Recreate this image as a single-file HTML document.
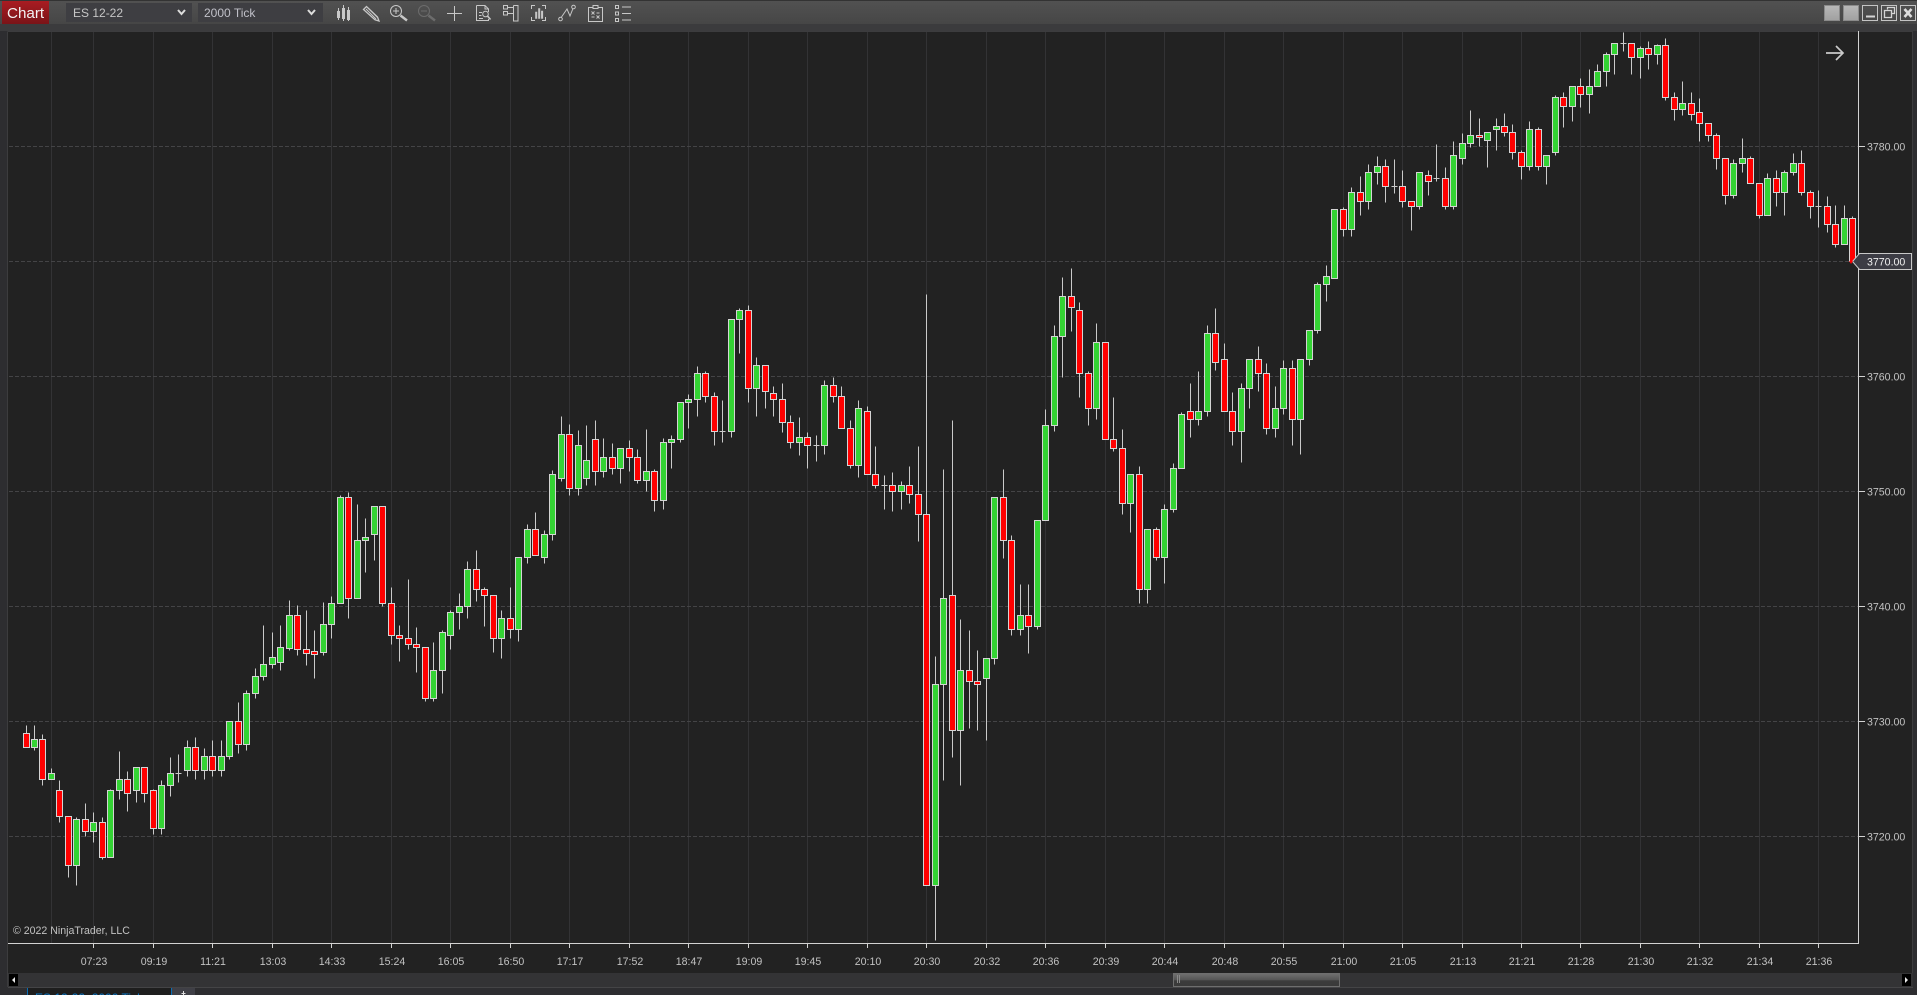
<!DOCTYPE html>
<html lang="en">
<head>
<meta charset="utf-8">
<title>Chart</title>
<style>
html,body{margin:0;padding:0;background:#222;width:1917px;height:995px;overflow:hidden}
svg{display:block}
text{font-family:"Liberation Sans",Arial,sans-serif}
</style>
</head>
<body>
<svg xmlns="http://www.w3.org/2000/svg" width="1917" height="995" viewBox="0 0 1917 995">
<defs>
<linearGradient id="bar" x1="0" y1="0" x2="0" y2="1"><stop offset="0" stop-color="#525252"/><stop offset="1" stop-color="#464646"/></linearGradient>
<linearGradient id="red" x1="0" y1="0" x2="0" y2="1"><stop offset="0" stop-color="#a91c22"/><stop offset="1" stop-color="#7a1418"/></linearGradient>
<linearGradient id="win" x1="0" y1="0" x2="0" y2="1"><stop offset="0" stop-color="#b8b8b8"/><stop offset="1" stop-color="#a0a0a0"/></linearGradient>
<linearGradient id="thumb" x1="0" y1="0" x2="0" y2="1"><stop offset="0" stop-color="#707070"/><stop offset=".5" stop-color="#555"/><stop offset=".55" stop-color="#3c3c3c"/><stop offset="1" stop-color="#3a3a3a"/></linearGradient>
</defs>

<!-- background frame -->
<rect width="1917" height="995" fill="#2d2d30"/>
<rect x="0" y="0" width="1917" height="24" fill="url(#bar)"/>
<rect x="0" y="0" width="1917" height="1" fill="#333"/>
<rect x="0" y="24" width="1917" height="7" fill="#3b3b3d"/>
<rect x="7" y="31" width="1906" height="942" fill="#222222"/>
<path d="M7.5 31.5H1912.5V973M7.5 31.5V987" fill="none" stroke="#3c3c3e"/>

<!-- toolbar -->
<rect x="2" y="1" width="47" height="23" fill="url(#red)"/>
<text x="7" y="18" font-size="15.2" fill="#f2f2f2">Chart</text>
<rect x="66" y="3" width="126" height="19" fill="#3e3e42"/>
<text x="73" y="17" font-size="12" fill="#c6c6c6">ES 12-22</text>
<path d="M178 10l3.5 4 3.5-4" fill="none" stroke="#dcdcdc" stroke-width="2"/>
<rect x="198" y="3" width="125" height="19" fill="#3e3e42"/>
<text x="204" y="17" font-size="12" fill="#c0c0c8">2000 Tick</text>
<path d="M308 10l3.5 4 3.5-4" fill="none" stroke="#dcdcdc" stroke-width="2"/>

<g fill="none" stroke="#c8c8c8" stroke-width="1">
 <!-- candles -->
 <path d="M338.5 8V20M343.5 5V21M348.5 7V21"/>
 <path d="M337 11h3v7h-3zM342 8h3v11h-3zM347 10h3v10h-3z" fill="#c8c8c8" stroke="none"/>
 <!-- pencil -->
 <path d="M363.5 9.5L366.5 6.5L377.5 17L379 21L375 19.8Z" stroke-width="1.3"/>
 <path d="M366 9L376 19M368 8L378 18" stroke-width="1"/>
 <!-- zoom in -->
 <circle cx="396" cy="11" r="5.5"/>
 <path d="M393 11h6M396 8v6"/>
 <path d="M400.5 15.5L407 20.5" stroke-width="2.4"/>
 <!-- zoom out -->
 <g stroke="#6c6c6c"><circle cx="424" cy="11" r="5.5"/><path d="M421 11h6"/><path d="M428.5 15.5L435 20.5" stroke-width="2.4"/></g>
 <!-- crosshair -->
 <path d="M447 13.5H462M454.5 6V21"/>
 <!-- doc search -->
 <path d="M476.5 5.5H485L488.5 9V12M485 5.5V9H488.5M488.5 19V20.5H476.5V5.5"/>
 <path d="M479 12.5h3M479 15.5h2.5M479 18.5h4"/>
 <circle cx="485.5" cy="14" r="2.8"/>
 <path d="M487.5 16L490.5 19.5" stroke-width="1.6"/>
 <!-- box list -->
 <path d="M503.5 5.5h4v3.5h-4zM503.5 11.5h4v3.5h-4zM513.5 5.5h4.5v15.5h-4.5V5.5M507.5 7.5h6M507.5 13.5h6"/>
 <!-- bracket bars -->
 <path d="M535 5.5H531.5V9M542 5.5H545.5V9M531.5 17V20.5H535M545.5 17V20.5H542"/>
 <path d="M535.5 12h1.4v6.5h-1.4zM538.5 8.5h1.4v10h-1.4zM541.4 11h1.4v7.500h-1.4z" fill="#c8c8c8" stroke="#c8c8c8" stroke-width=".6"/>
 <!-- line nodes -->
 <path d="M561.5 17L567 9L570 16L573 8.500"/>
 <circle cx="560.500" cy="19" r="1.800"/>
 <circle cx="573.500" cy="7" r="1.800"/>
 <!-- clipboard -->
 <path d="M593 7.500H588.500V21.500H602.500V7.500H598M593 5.500H598V8.500H593Z"/>
 <path d="M591.500 11.500l3 3M594.500 11.500l-3 3M596.500 15.500l3 3M599.500 15.500l-3 3M596.500 13h3M591.500 17h3" stroke-width=".9"/>
 <!-- list -->
 <path d="M615.500 5.500h3v3h-3zM615.500 12h3v3h-3zM615.500 18.500h3v3h-3zM622 7H631M622 13.500H631M622 20H631"/>
</g>

<!-- window buttons -->
<rect x="1824.500" y="5.500" width="15" height="15" fill="url(#win)" stroke="#8a8a8a"/>
<rect x="1843.500" y="5.500" width="15" height="15" fill="url(#win)" stroke="#8a8a8a"/>
<g fill="none" stroke="#c4c4c4">
 <rect x="1862.500" y="5.500" width="15" height="15"/>
 <path d="M1866 16.500h9" stroke-width="2" stroke="#d4d4d4"/>
 <rect x="1881.500" y="5.500" width="15" height="15"/>
 <path d="M1887.500 9.500V7.500H1894.500V13.500H1892M1884.500 10.500h7v7h-7z" stroke-width="1.300" stroke="#d4d4d4"/>
 <rect x="1900.500" y="5.500" width="15" height="15"/>
 <path d="M1904.500 9l7 8M1911.500 9l-7 8" stroke-width="2.600" stroke="#dcdcdc"/>
</g>

<!-- vertical grid -->
<path stroke="#333335" stroke-width="1" fill="none" d="M51.500 32V943M93.500 32V943M153.500 32V943M212.500 32V943M272.500 32V943M331.500 32V943M391.500 32V943M450.500 32V943M510.500 32V943M569.500 32V943M629.500 32V943M688.500 32V943M748.500 32V943M807.500 32V943M867.500 32V943M926.500 32V943M986.500 32V943M1045.500 32V943M1105.500 32V943M1164.500 32V943M1224.500 32V943M1283.500 32V943M1343.500 32V943M1402.500 32V943M1462.500 32V943M1521.500 32V943M1580.500 32V943M1640.500 32V943M1699.500 32V943M1759.500 32V943M1818.500 32V943"/>
<!-- horizontal grid -->
<path stroke="#444446" stroke-width="1" stroke-dasharray="4 2" fill="none" d="M9 146.500H1858M9 261.500H1858M9 376.500H1858M9 491.500H1858M9 606.500H1858M9 721.500H1858M9 836.500H1858"/>

<!-- candles -->
<g transform="translate(.5 .5)" stroke-width="1">
<path fill="none" stroke="#cacaca" d="M26 725V733M34 725V750M42 734V785M51 768V773M59 780V822M68 816V877M76 817V885M85 803V836M93 812V842M102 817V859M110 789V790M119 751V799M127 771V811M136 767V802M144 767V802M153 789V834M161 780V834M170 757V796M178 754V782M187 740V776M195 737V779M204 748V779M212 740V776M221 740V776M229 721V759M238 702V753M246 690V750M255 668V698M263 625V680M272 632V668M280 625V670M289 600V650M297 605V655M306 610V665M314 630V678M323 602V655M331 596V638M340 495V603M348 492V618M357 504V598M365 518V572M374 506V560M382 506V606M391 587V644M399 625V661M408 579V649M416 627V672M425 647V701M433 642V701M442 630V693M450 610V649M459 593V629M467 561V618M476 550V601M484 587V626M493 595V652M501 610V658M510 587V638M518 557V641M527 524V563M535 512V555M544 530V563M552 470V540M561 416V481M569 424V495M578 430V495M586 425V485M595 420V485M603 438V477M612 443V474M620 448V483M629 440V471M637 449V483M646 429V491M654 469V511M663 438V509M671 435V468M680 402V442M688 394V428M697 366V416M705 371V402M714 392V445M722 400V442M731 319V437M739 308V353M748 305V402M756 357V416M765 365V408M773 386V416M782 383V432M790 415V448M799 417V455M807 432V468M816 435V461M824 380V454M833 377V402M841 386V428M850 420V468M858 400V477M867 406V474M875 446V488M884 475V509M892 472V511M901 481V509M909 466V503M918 446V541M926 294V885M935 656V940M943 469V780M952 420V757M960 619V785M969 630V728M977 650V730M986 658V740M994 497V664M1003 469V558M1011 535V635M1020 584V635M1028 584V653M1037 520V629M1045 409V520M1054 325V431M1062 277V377M1071 268V331M1079 302V397M1088 371V425M1096 323V419M1105 342V439M1113 397V451M1122 429V514M1130 474V532M1139 466V603M1147 529V603M1156 527V560M1164 504V583M1173 463V512M1181 412V468M1190 383V437M1198 371V425M1207 325V416M1215 308V370M1224 343V411M1232 392V445M1241 383V462M1249 359V408M1258 346V391M1266 363V434M1275 386V437M1283 360V414M1292 360V445M1300 359V454M1309 330V365M1317 282V333M1326 265V301M1334 209V278M1343 207V236M1351 187V236M1360 176V215M1368 164V209M1377 156V184M1385 159V202M1394 159V193M1402 170V207M1411 201V230M1419 172V209M1428 170V195M1436 144V181M1445 167V209M1453 141V209M1462 133V164M1470 110V147M1479 118V146M1487 132V167M1496 118V150M1504 113V136M1512 124V159M1521 150V179M1529 121V170M1538 127V170M1546 155V184M1555 95V155M1563 92V127M1572 86V121M1580 78V107M1589 69V113M1597 64V86M1606 52V86M1614 43V74M1623 32V51M1631 43V74M1640 46V78M1648 41V69M1657 44V64M1665 38V100M1674 92V120M1682 81V115M1691 92V120M1699 98V141M1708 123V141M1716 133V169M1725 158V204M1733 159V198M1742 138V172M1750 156V183M1759 183V218M1767 173V215M1776 170V206M1784 170V215M1793 153V175M1801 150V195M1810 190V218M1818 190V227M1827 196V232M1835 205V247M1844 205V244M1852 216V261M175 773h6M719 431h6M813 445h6M881 485h6M1391 186h6M1433 178h6M1620 43h6M1815 206h6"/>
<path fill="#ff0000" stroke="#d4d4d4" d="M23 733h6v14h-6zM39 739h6v40h-6zM56 790h6v26h-6zM65 816h6v49h-6zM82 819h6v12h-6zM99 822h6v35h-6zM124 779h6v14h-6zM141 767h6v26h-6zM150 790h6v38h-6zM192 747h6v23h-6zM209 756h6v14h-6zM235 721h6v23h-6zM294 615h6v34h-6zM303 649h6v4h-6zM311 651h6v3h-6zM345 497h6v101h-6zM379 506h6v97h-6zM388 603h6v32h-6zM396 635h6v3h-6zM405 638h6v6h-6zM413 644h6v3h-6zM422 647h6v51h-6zM473 569h6v20h-6zM481 589h6v6h-6zM490 595h6v43h-6zM507 618h6v11h-6zM532 529h6v26h-6zM566 434h6v54h-6zM592 439h6v32h-6zM609 457h6v11h-6zM626 448h6v9h-6zM634 457h6v23h-6zM651 471h6v29h-6zM702 373h6v23h-6zM711 396h6v35h-6zM745 310h6v78h-6zM762 365h6v26h-6zM770 393h6v6h-6zM779 399h6v23h-6zM787 422h6v20h-6zM804 437h6v8h-6zM830 385h6v11h-6zM838 396h6v32h-6zM847 428h6v37h-6zM864 411h6v63h-6zM872 474h6v11h-6zM889 485h6v6h-6zM906 485h6v9h-6zM915 494h6v20h-6zM923 514h6v371h-6zM949 595h6v135h-6zM966 670h6v11h-6zM974 681h6v3h-6zM1000 497h6v43h-6zM1008 540h6v89h-6zM1025 615h6v11h-6zM1068 296h6v11h-6zM1076 310h6v63h-6zM1085 373h6v35h-6zM1102 342h6v97h-6zM1110 439h6v9h-6zM1119 448h6v55h-6zM1136 474h6v115h-6zM1153 529h6v28h-6zM1187 411h6v8h-6zM1212 333h6v29h-6zM1221 359h6v52h-6zM1229 411h6v20h-6zM1255 359h6v14h-6zM1263 373h6v55h-6zM1289 368h6v51h-6zM1340 209h6v20h-6zM1357 192h6v9h-6zM1382 166h6v20h-6zM1399 186h6v15h-6zM1408 201h6v5h-6zM1425 175h6v6h-6zM1442 178h6v28h-6zM1476 135h6v2h-6zM1501 126h6v6h-6zM1509 132h6v20h-6zM1518 152h6v14h-6zM1535 129h6v37h-6zM1560 97h6v9h-6zM1577 86h6v8h-6zM1628 43h6v14h-6zM1645 48h6v6h-6zM1662 45h6v52h-6zM1671 97h6v12h-6zM1688 103h6v11h-6zM1696 112h6v11h-6zM1705 123h6v12h-6zM1713 135h6v23h-6zM1722 158h6v37h-6zM1747 158h6v25h-6zM1756 183h6v32h-6zM1773 178h6v14h-6zM1798 163h6v29h-6zM1807 192h6v14h-6zM1824 206h6v18h-6zM1832 224h6v20h-6zM1849 218h6v43h-6z"/>
<path fill="#34d334" stroke="#d4d4d4" d="M31 739h6v8h-6zM48 773h6v6h-6zM73 819h6v46h-6zM90 822h6v9h-6zM107 790h6v67h-6zM116 779h6v11h-6zM133 767h6v23h-6zM158 785h6v43h-6zM167 773h6v12h-6zM184 747h6v23h-6zM201 756h6v14h-6zM218 756h6v14h-6zM226 721h6v35h-6zM243 693h6v51h-6zM252 676h6v17h-6zM260 664h6v12h-6zM269 657h6v7h-6zM277 647h6v15h-6zM286 615h6v33h-6zM320 624h6v28h-6zM328 603h6v21h-6zM337 497h6v106h-6zM354 540h6v58h-6zM362 537h6v3h-6zM371 506h6v28h-6zM430 670h6v28h-6zM439 632h6v38h-6zM447 612h6v23h-6zM456 606h6v6h-6zM464 569h6v37h-6zM498 618h6v20h-6zM515 557h6v72h-6zM524 529h6v28h-6zM541 534h6v23h-6zM549 474h6v60h-6zM558 434h6v44h-6zM575 445h6v43h-6zM583 460h6v18h-6zM600 457h6v14h-6zM617 448h6v20h-6zM643 471h6v9h-6zM660 442h6v58h-6zM668 439h6v3h-6zM677 402h6v37h-6zM685 399h6v3h-6zM694 373h6v26h-6zM728 319h6v112h-6zM736 310h6v9h-6zM753 365h6v23h-6zM796 437h6v5h-6zM821 385h6v60h-6zM855 408h6v57h-6zM898 485h6v6h-6zM932 684h6v201h-6zM940 598h6v86h-6zM957 670h6v60h-6zM983 658h6v20h-6zM991 497h6v161h-6zM1017 615h6v14h-6zM1034 520h6v106h-6zM1042 425h6v95h-6zM1051 336h6v89h-6zM1059 296h6v40h-6zM1093 342h6v66h-6zM1127 474h6v29h-6zM1144 529h6v60h-6zM1161 509h6v48h-6zM1170 468h6v41h-6zM1178 414h6v54h-6zM1195 411h6v8h-6zM1204 333h6v78h-6zM1238 388h6v43h-6zM1246 359h6v29h-6zM1272 408h6v20h-6zM1280 368h6v40h-6zM1297 359h6v60h-6zM1306 330h6v29h-6zM1314 284h6v46h-6zM1323 276h6v8h-6zM1331 209h6v69h-6zM1348 192h6v37h-6zM1365 172h6v29h-6zM1374 166h6v6h-6zM1416 172h6v34h-6zM1450 155h6v51h-6zM1459 143h6v15h-6zM1467 135h6v8h-6zM1484 132h6v8h-6zM1493 126h6v3h-6zM1526 129h6v37h-6zM1543 155h6v11h-6zM1552 97h6v55h-6zM1569 86h6v20h-6zM1586 86h6v8h-6zM1594 71h6v15h-6zM1603 54h6v17h-6zM1611 43h6v11h-6zM1637 48h6v9h-6zM1654 45h6v9h-6zM1679 103h6v6h-6zM1730 163h6v32h-6zM1739 158h6v5h-6zM1764 178h6v37h-6zM1781 172h6v20h-6zM1790 163h6v9h-6zM1841 218h6v26h-6z"/>
</g>

<!-- axes -->
<path stroke="#d2d2d2" fill="none" d="M1858.500 31V944M8 943.500H1859"/>
<path stroke="#d2d2d2" fill="none" d="M1859 146.500h6M1859 376.500h6M1859 491.500h6M1859 606.500h6M1859 721.500h6M1859 836.500h6"/>
<path stroke="#d2d2d2" fill="none" d="M93.500 944v4M153.500 944v4M212.500 944v4M272.500 944v4M331.500 944v4M391.500 944v4M450.500 944v4M510.500 944v4M569.500 944v4M629.500 944v4M688.500 944v4M748.500 944v4M807.500 944v4M867.500 944v4M926.500 944v4M986.500 944v4M1045.500 944v4M1105.500 944v4M1164.500 944v4M1224.500 944v4M1283.500 944v4M1343.500 944v4M1402.500 944v4M1462.500 944v4M1521.500 944v4M1580.500 944v4M1640.500 944v4M1699.500 944v4M1759.500 944v4M1818.500 944v4"/>

<!-- price labels -->
<g font-size="10.6" fill="#c2c2c2">
<text x="1867" y="150.500">3780.00</text>
<text x="1867" y="380.500">3760.00</text>
<text x="1867" y="495.500">3750.00</text>
<text x="1867" y="610.500">3740.00</text>
<text x="1867" y="725.500">3730.00</text>
<text x="1867" y="840.500">3720.00</text>
</g>
<path d="M1852.500 261.500L1859.500 253.500H1911.500V269.500H1859.500Z" fill="#3c3c44" stroke="#c8c8c8"/>
<path d="M1849 261h4l-2 3z" fill="#ff0000"/>
<text x="1867" y="265.500" font-size="10.6" fill="#f0f0f0">3770.00</text>

<!-- time labels -->
<g font-size="10.6" fill="#c2c2c2" text-anchor="middle">
<text x="94" y="965">07:23</text><text x="154" y="965">09:19</text><text x="213" y="965">11:21</text><text x="273" y="965">13:03</text><text x="332" y="965">14:33</text><text x="392" y="965">15:24</text><text x="451" y="965">16:05</text><text x="511" y="965">16:50</text><text x="570" y="965">17:17</text><text x="630" y="965">17:52</text><text x="689" y="965">18:47</text><text x="749" y="965">19:09</text><text x="808" y="965">19:45</text><text x="868" y="965">20:10</text><text x="927" y="965">20:30</text><text x="987" y="965">20:32</text><text x="1046" y="965">20:36</text><text x="1106" y="965">20:39</text><text x="1165" y="965">20:44</text><text x="1225" y="965">20:48</text><text x="1284" y="965">20:55</text><text x="1344" y="965">21:00</text><text x="1403" y="965">21:05</text><text x="1463" y="965">21:13</text><text x="1522" y="965">21:21</text><text x="1581" y="965">21:28</text><text x="1641" y="965">21:30</text><text x="1700" y="965">21:32</text><text x="1760" y="965">21:34</text><text x="1819" y="965">21:36</text>
</g>

<text x="13" y="934" font-size="10.6" fill="#c2c2c2">© 2022 NinjaTrader, LLC</text>

<!-- arrow -->
<path d="M1826 53H1843M1836 46L1843 53L1836 60" fill="none" stroke="#cacaca" stroke-width="1.700"/>

<!-- scrollbar -->
<rect x="8" y="973" width="1905" height="14" fill="#333335"/>
<rect x="8" y="987" width="1905" height="1" fill="#444446"/>
<rect x="9" y="974" width="9" height="12" fill="#000"/>
<path d="M12 980l3-3v6z" fill="#e8e8e8"/>
<rect x="1902" y="974" width="9" height="12" fill="#000"/>
<path d="M1908 980l-3-3v6z" fill="#e8e8e8"/>
<rect x="1173.500" y="973.500" width="166" height="13" fill="url(#thumb)" stroke="#6e6e6e"/>
<path d="M1177.500 975v8M1179.500 975v8" stroke="#8a8a8a"/>

<!-- tab -->
<rect x="27" y="988" width="145" height="7" fill="#1e1e1e"/>
<path d="M27.500 988V995M171.500 988V995" stroke="#0a6db5"/>
<text x="35" y="1002" font-size="12" fill="#0a78c8">ES 12-22: 2000 Tick</text>
<rect x="172" y="988" width="23" height="7" fill="#3f3f46"/>
<path d="M183.500 991v4M181.500 993.500h4" stroke="#e0e0e0"/>
</svg>
</body>
</html>
